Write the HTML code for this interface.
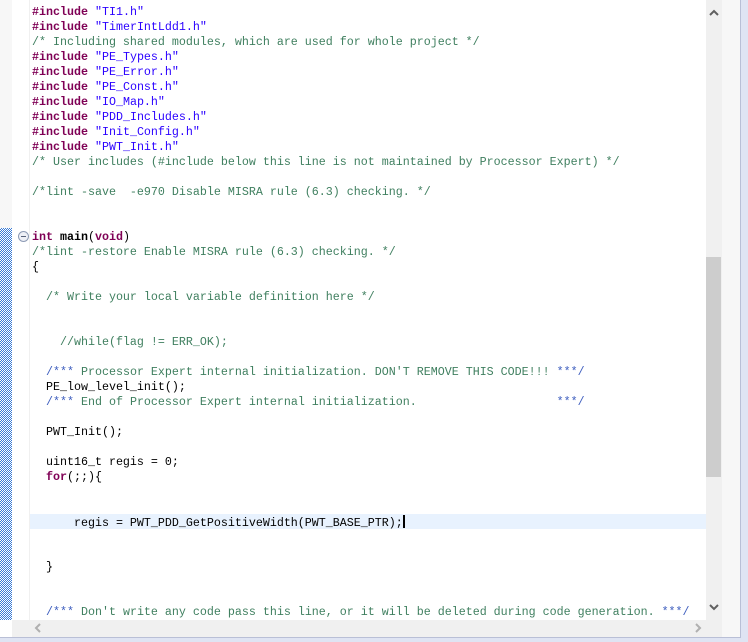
<!DOCTYPE html>
<html><head><meta charset="utf-8"><style>
*{margin:0;padding:0}
body{width:748px;height:642px;overflow:hidden;background:#dfe4f3;position:relative;font-family:"Liberation Mono",monospace}
#ed{position:absolute;left:0;top:0;width:740px;height:637px;background:#fff;border-right:1px solid #b9bfd6;border-bottom:1px solid #b9bfd6}
#lbar{position:absolute;left:0;top:0;width:12px;height:620px;background:#f7f7f7}
#chk{position:absolute;left:0;top:228px;width:12px;height:392px;background-color:#fff;background-image:linear-gradient(45deg,#3a7bd5 25%,transparent 25%,transparent 75%,#3a7bd5 75%),linear-gradient(45deg,#3a7bd5 25%,transparent 25%,transparent 75%,#3a7bd5 75%);background-size:2px 2px;background-position:0 0,1px 1px}
#gut{position:absolute;left:29px;top:0;width:1px;height:620px;background:#f0f0f0}
#code{position:absolute;left:32px;top:5px;font-size:11.67px;line-height:15px;color:#000}
.l{height:15px;white-space:pre;line-height:15px}
.k{color:#7f0055;font-weight:bold}
.s{color:#2a00ff}
.c{color:#3f7f5f}
.d{color:#3f5fbf}
.b{font-weight:bold}
#hl{position:absolute;left:30px;top:514px;width:676px;height:15px;background:#e8f2fe}
#vs{position:absolute;left:706px;top:0;width:16px;height:620px;background:#f0f0f0}
#thumb{position:absolute;left:706px;top:257px;width:15px;height:220px;background:#cdcdcd}
#vs2{position:absolute;left:722px;top:0;width:18px;height:637px;background:#f7f7f7}
#hs{position:absolute;left:12px;top:620px;width:710px;height:17px;background:#f0f0f0}
#fold{position:absolute;left:18px;top:231px;width:9px;height:9px;border:1px solid #8d9bb5;border-radius:50%;background:#eef0f6}
#fold:after{content:"";position:absolute;left:2px;top:4px;width:5px;height:1px;background:#57627a}
#caret{display:inline-block;width:2px;height:13px;background:#000;vertical-align:-2px}
</style></head><body>
<div id="ed"></div>
<div id="lbar"></div><div id="chk"></div><div id="gut"></div>
<div id="hl"></div>
<div id="vs"></div><div id="thumb"></div><div id="vs2"></div><div id="hs"></div>
<svg style="position:absolute;left:709px;top:9px" width="10" height="7"><path d="M1 6 L5 2 L9 6" stroke="#606060" stroke-width="2" fill="none"/></svg>
<svg style="position:absolute;left:709px;top:604px" width="10" height="7"><path d="M1 1 L5 5 L9 1" stroke="#606060" stroke-width="2" fill="none"/></svg>
<svg style="position:absolute;left:34px;top:623px" width="7" height="10"><path d="M6 1 L2 5 L6 9" stroke="#b0b0b0" stroke-width="2" fill="none"/></svg>
<svg style="position:absolute;left:695px;top:623px" width="7" height="10"><path d="M1 1 L5 5 L1 9" stroke="#b0b0b0" stroke-width="2" fill="none"/></svg>
<div id="fold"></div>
<div id="code"><div class="l"><span class="k">#include</span> <span class="s">"TI1.h"</span></div><div class="l"><span class="k">#include</span> <span class="s">"TimerIntLdd1.h"</span></div><div class="l c">/* Including shared modules, which are used for whole project */</div><div class="l"><span class="k">#include</span> <span class="s">"PE_Types.h"</span></div><div class="l"><span class="k">#include</span> <span class="s">"PE_Error.h"</span></div><div class="l"><span class="k">#include</span> <span class="s">"PE_Const.h"</span></div><div class="l"><span class="k">#include</span> <span class="s">"IO_Map.h"</span></div><div class="l"><span class="k">#include</span> <span class="s">"PDD_Includes.h"</span></div><div class="l"><span class="k">#include</span> <span class="s">"Init_Config.h"</span></div><div class="l"><span class="k">#include</span> <span class="s">"PWT_Init.h"</span></div><div class="l c">/* User includes (#include below this line is not maintained by Processor Expert) */</div><div class="l"> </div><div class="l c">/*lint -save  -e970 Disable MISRA rule (6.3) checking. */</div><div class="l"> </div><div class="l"> </div><div class="l"><span class="k">int</span> <span class="b">main</span>(<span class="k">void</span>)</div><div class="l c">/*lint -restore Enable MISRA rule (6.3) checking. */</div><div class="l">{</div><div class="l"> </div><div class="l c">  /* Write your local variable definition here */</div><div class="l"> </div><div class="l"> </div><div class="l c">    //while(flag != ERR_OK);</div><div class="l"> </div><div class="l">  <span class="d">/***</span><span class="c"> Processor Expert internal initialization. DON'T REMOVE THIS CODE!!! </span><span class="d">***/</span></div><div class="l">  PE_low_level_init();</div><div class="l">  <span class="d">/***</span><span class="c"> End of Processor Expert internal initialization.                    </span><span class="d">***/</span></div><div class="l"> </div><div class="l">  PWT_Init();</div><div class="l"> </div><div class="l">  uint16_t regis = 0;</div><div class="l">  <span class="k">for</span>(;;){</div><div class="l"> </div><div class="l"> </div><div class="l">      regis = PWT_PDD_GetPositiveWidth(PWT_BASE_PTR);<span id="caret"></span></div><div class="l"> </div><div class="l"> </div><div class="l">  }</div><div class="l"> </div><div class="l"> </div><div class="l">  <span class="d">/***</span><span class="c"> Don't write any code pass this line, or it will be deleted during code generation. </span><span class="d">***/</span></div></div>
</body></html>
